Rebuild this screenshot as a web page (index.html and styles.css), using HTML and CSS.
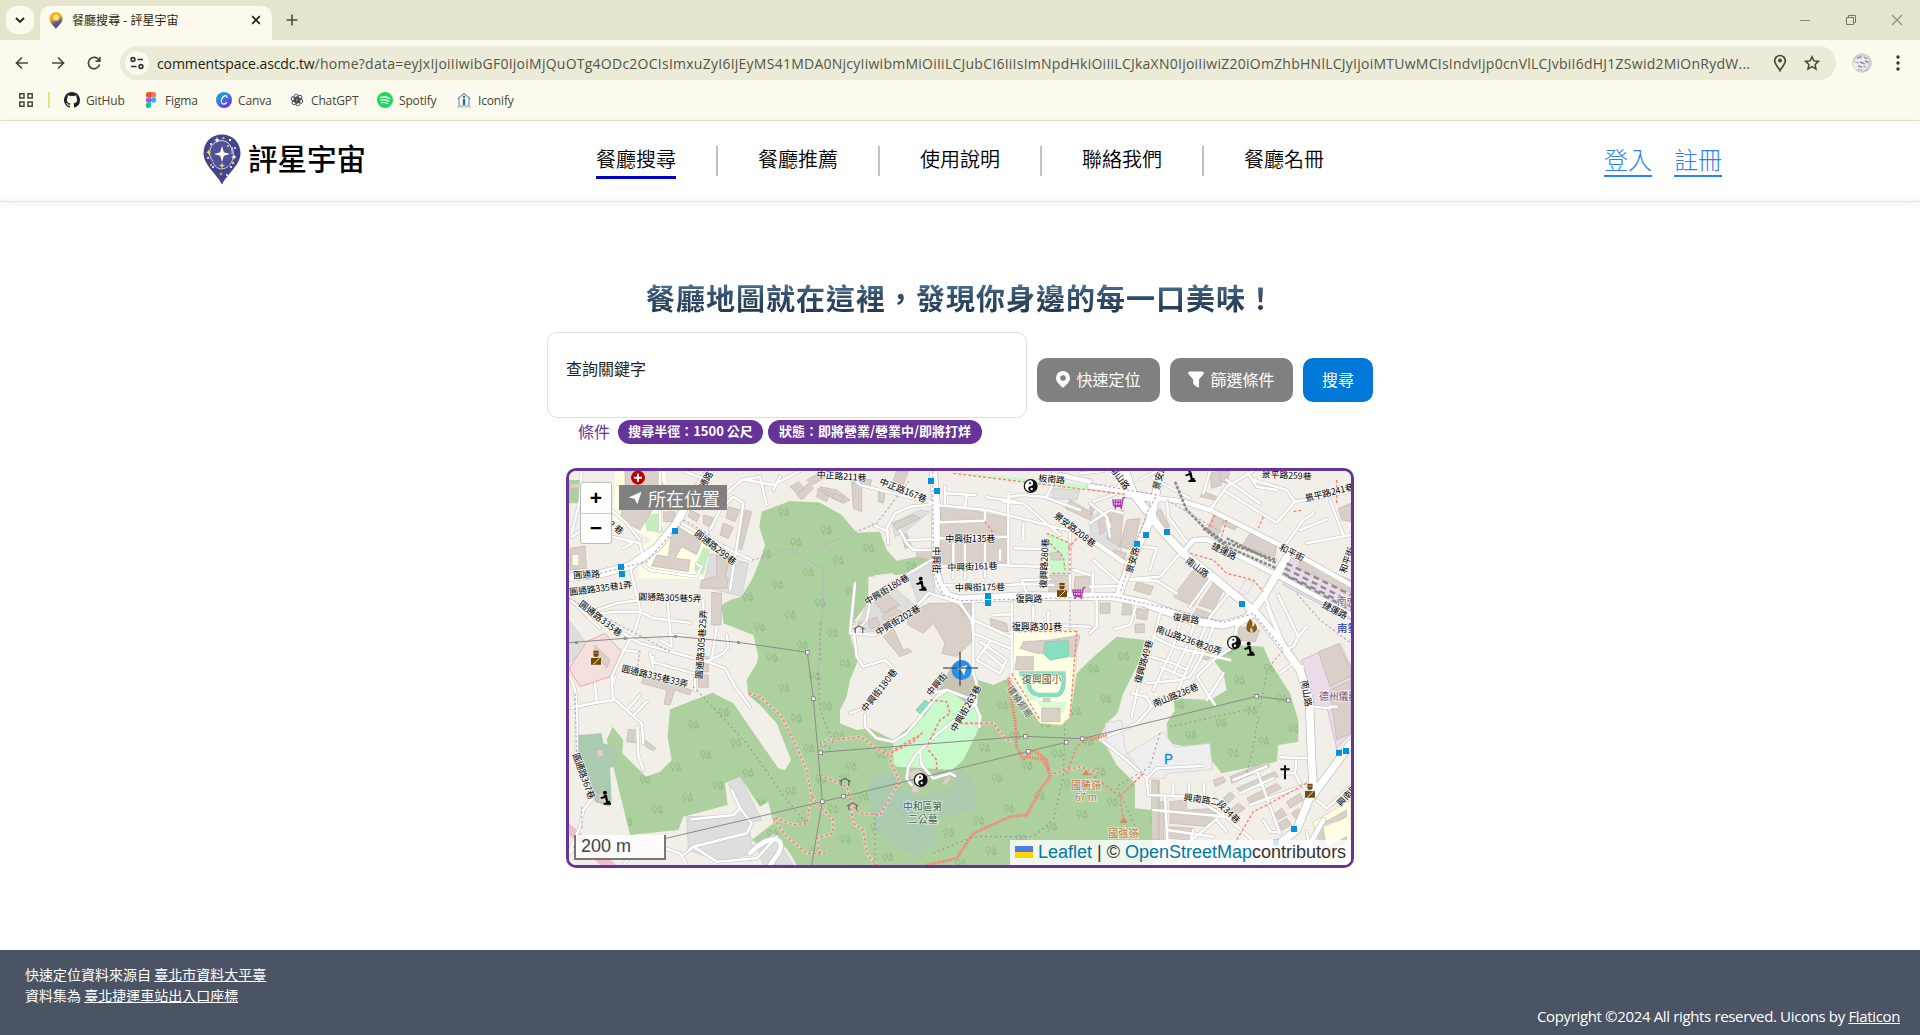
FILE: index.html
```html
<!DOCTYPE html>
<html lang="zh-Hant">
<head>
<meta charset="utf-8">
<title>餐廳搜尋 - 評星宇宙</title>
<link rel="stylesheet" href="styles.css">
</head>
<body>
<div class="browser">
  <div class="tabstrip">
    <div class="tab-menu"><svg width="12" height="12" viewBox="0 0 12 12"><path d="M2 4l4 4 4-4" fill="none" stroke="#222" stroke-width="1.9"/></svg></div>
    <div class="tab">
      <svg class="favicon" width="14" height="17" viewBox="0 0 14 17"><defs><linearGradient id="fav" x1="0" y1="0" x2=".3" y2="1"><stop offset=".45" stop-color="#f8ae1c"/><stop offset=".75" stop-color="#59558f"/></linearGradient></defs><path d="M7 0a6.6 6.6 0 0 1 6.6 6.6C13.600 11 9 14 7 17 5 14 .4 11 .4 6.600A6.600 6.600 0 0 1 7 0z" fill="url(#fav)"/><circle cx="7" cy="5.500" r="3" fill="#ffe27a"/></svg>
      <span class="tab-title">餐廳搜尋 - 評星宇宙</span>
      <svg width="10" height="10" viewBox="0 0 10 10"><path d="M1.200 1.200l7.600 7.600M8.800 1.200L1.200 8.800" stroke="#222" stroke-width="1.700"/></svg>
    </div>
    <svg class="plus" width="12" height="12" viewBox="0 0 12 12"><path d="M6 .5v11M.5 6h11" stroke="#4a4a3c" stroke-width="1.600"/></svg>
    <div class="winctl">
      <svg width="12" height="12" viewBox="0 0 12 12"><path d="M1 6.500h10" stroke="#8a8a7c"/></svg>
      <svg width="12" height="12" viewBox="0 0 12 12"><path d="M1.500 3.500h7v7h-7zM3.500 3.500v-2h7v7h-2" fill="none" stroke="#77776a"/></svg>
      <svg width="12" height="12" viewBox="0 0 12 12"><path d="M1 1l10 10M11 1L1 11" stroke="#8a8a7c" stroke-width="1.100"/></svg>
    </div>
  </div>
  <div class="toolbar">
    <div class="navbtns">
      <svg width="14" height="14" viewBox="0 0 14 14"><path d="M13 7H2M7 1.500L1.500 7 7 12.500" class="tb"/></svg>
      <svg width="14" height="14" viewBox="0 0 14 14"><path d="M1 7h11M7 1.500L12.500 7 7 12.500" class="tb"/></svg>
      <svg width="14" height="14" viewBox="0 0 14 14"><path d="M12.200 4.500A5.700 5.700 0 1 0 12.600 8.500M12.800 1v4.200H8.500" class="tb"/></svg>
    </div>
    <div class="omnibox">
      <span class="site"><svg width="14" height="14" viewBox="0 0 14 14"><g fill="none" stroke="#333" stroke-width="1.600"><circle cx="3" cy="3.500" r="1.900"/><path d="M7.500 3.500H13M1 10.500h5.500"/><circle cx="11" cy="10.500" r="1.900"/></g></svg></span>
      <span class="url"><b>commentspace.ascdc.tw</b>/home?data=eyJxIjoiIiwibGF0IjoiMjQuOTg4ODc2OCIsImxuZyI6IjEyMS41MDA0NjcyIiwibmMiOiIiLCJubCI6IiIsImNpdHkiOiIiLCJkaXN0IjoiIiwiZ20iOmZhbHNlLCJyIjoiMTUwMCIsIndvIjp0cnVlLCJvbiI6dHJ1ZSwid2MiOnRydW...</span>
      <svg class="pin" width="14" height="18" viewBox="0 0 14 18"><path d="M7 1.500a5.300 5.300 0 0 1 5.300 5.300C12.300 10.500 8 14 7 16.500 6 14 1.700 10.500 1.700 6.800A5.300 5.300 0 0 1 7 1.500z" class="tb"/><circle cx="7" cy="6.600" r="2" fill="#474739"/></svg>
      <svg width="16" height="16" viewBox="0 0 16 16"><path d="M8 1.800l1.900 4.100 4.500.5-3.300 3.100.9 4.500L8 11.700 4 14l.9-4.500L1.600 6.400l4.500-.5z" fill="none" stroke="#474739" stroke-width="1.500"/></svg>
    </div>
    <svg class="avatar" width="20" height="20" viewBox="0 0 20 20"><circle cx="10" cy="10" r="9.800" fill="#d0cdcb"/><path d="M2 8l4-4 3 2 4-4 4 5-3 2 3 4-5 4-4-2-5 2-2-5z" fill="#eee9f2"/><path d="M5 5l4-1M12 4l3 2M8 9l5 2M6 13l4 1M13 8l3 1" stroke="#8f9289" stroke-width="1.400"/><path d="M3 9l4 1M11 13l3 1" stroke="#9b8dc0"/></svg>
    <svg width="4" height="18" viewBox="0 0 4 18"><g fill="#33332a"><circle cx="2" cy="3" r="1.700"/><circle cx="2" cy="9" r="1.700"/><circle cx="2" cy="15" r="1.700"/></g></svg>
  </div>
  <div class="bookmarks">
    <svg class="apps" width="14" height="14" viewBox="0 0 14 14"><path d="M.8.800h4.200v4.200H.8zM9 .8h4.200v4.200H9zM.8 9h4.200v4.200H.8zM9 9h4.200v4.200H9z" fill="none" stroke="#474739" stroke-width="1.500"/></svg>
    <i class="vsep"></i>
    <span class="bm" style="width:79px"><svg width="16" height="16" viewBox="0 0 16 16"><path fill="#1f2328" d="M8 0C3.580 0 0 3.580 0 8c0 3.540 2.290 6.530 5.470 7.590.4.070.55-.17.55-.38 0-.19-.01-.82-.01-1.490-2.010.37-2.530-.49-2.690-.94-.09-.23-.48-.94-.82-1.130-.28-.15-.68-.52-.01-.53.63-.01 1.080.58 1.230.82.720 1.210 1.870.87 2.330.66.070-.52.280-.87.510-1.070-1.780-.2-3.640-.89-3.640-3.950 0-.87.310-1.590.82-2.150-.08-.2-.36-1.020.08-2.120 0 0 .67-.21 2.200.82a7.600 7.600 0 0 1 4 0c1.530-1.040 2.200-.82 2.200-.82.440 1.100.16 1.920.08 2.120.51.560.82 1.270.82 2.150 0 3.070-1.870 3.750-3.650 3.950.29.250.54.730.54 1.480 0 1.070-.01 1.930-.01 2.200 0 .21.150.46.550.38A8 8 0 0 0 16 8c0-4.420-3.580-8-8-8z"/></svg>GitHub</span>
    <span class="bm" style="width:73px"><svg width="16" height="16" viewBox="0 0 16 16"><path d="M5.500 0H8v5.300H5.500a2.650 2.650 0 0 1 0-5.300z" fill="#f24e1e"/><path d="M8 0h2.500a2.650 2.650 0 0 1 0 5.300H8z" fill="#ff7262"/><path d="M5.500 5.300H8v5.300H5.500a2.650 2.650 0 0 1 0-5.300z" fill="#a259ff"/><circle cx="10.600" cy="8" r="2.650" fill="#1abcfe"/><path d="M5.500 10.600H8v2.700a2.650 2.650 0 1 1-2.500-2.700z" fill="#0acf83"/></svg>Figma</span>
    <span class="bm" style="width:73px"><svg width="16" height="16" viewBox="0 0 16 16"><defs><linearGradient id="cv" x1="0" y1="0" x2=".6" y2="1"><stop offset="0" stop-color="#00c4cc"/><stop offset="1" stop-color="#7034f0"/></linearGradient></defs><circle cx="8" cy="8" r="8" fill="url(#cv)"/><path d="M10.800 5.800c.5-1.800-.7-2.600-2.200-2-2.400.9-3.900 4.300-3.100 6.600.8 2.400 3.800 2.200 5.200-.3" fill="none" stroke="#fff" stroke-width="1.300"/></svg>Canva</span>
    <span class="bm" style="width:88px"><svg width="16" height="16" viewBox="0 0 16 16"><rect width="16" height="16" rx="3" fill="#fff"/><g fill="none" stroke="#444" stroke-width=".9"><rect x="5.200" y="2.200" width="4" height="8" rx="2" id="petal"/><use href="#petal" transform="rotate(60 8 8)"/><use href="#petal" transform="rotate(120 8 8)"/><use href="#petal" transform="rotate(180 8 8)"/><use href="#petal" transform="rotate(240 8 8)"/><use href="#petal" transform="rotate(300 8 8)"/></g></svg>ChatGPT</span>
    <span class="bm" style="width:79px"><svg width="16" height="16" viewBox="0 0 16 16"><circle cx="8" cy="8" r="8" fill="#1ed760"/><g fill="none" stroke="#fff" stroke-linecap="round"><path d="M3.500 5.500c3-.9 6.500-.6 9 .8" stroke-width="1.500"/><path d="M4 8.200c2.600-.7 5.500-.4 7.700.9" stroke-width="1.300"/><path d="M4.400 10.800c2.300-.5 4.400-.3 6.300.8" stroke-width="1.100"/></g></svg>Spotify</span>
    <span class="bm"><svg width="16" height="16" viewBox="0 0 16 16"><rect width="16" height="16" fill="#fff"/><path d="M1.500 7L8 1.500 14.500 7M3 6v8h10V6" fill="none" stroke="#8b8f94" stroke-width="1.200"/><path d="M8 7v6" stroke="#1769aa" stroke-width="2.400"/><circle cx="8" cy="5" r="1.200" fill="#1769aa"/><path d="M1 15h14" stroke="#ccc" stroke-width="1.500"/></svg>Iconify</span>
  </div>
</div>

<header class="site-header">
  <div class="brand">
    <svg width="38" height="51" viewBox="0 0 38 51"><path d="M19 .5C29.500.500 37.500 8.500 37.500 19 37.500 31 25 39 19 50.500 13 39 .5 31 .5 19 .5 8.500 8.500.500 19 .5z" fill="#44448a"/><ellipse cx="17" cy="19" rx="12" ry="15" fill="#5a58a0" opacity=".6"/><path d="M10 27a12 12 0 0 1 6-20c8-2 14 5 13 13M29 13c4 10-1 21-10 22-4 0-8-3-9-7" fill="none" stroke="#d6d6ec" stroke-width="1"/><path d="M19 12l1.800 6.200L27 20l-6.200 1.800L19 28l-1.800-6.200L11 20l6.200-1.800z" fill="#fff"/><g fill="#fff"><path d="M14 3l.8 2.200L17 6l-2.200.8L14 9l-.8-2.200L11 6l2.200-.8zM31 20l.8 2.200L34 23l-2.200.8L31 26l-.8-2.200L28 23l2.200-.8z"/><circle cx="8" cy="10" r="1"/><circle cx="27" cy="6" r="1.200"/><circle cx="32" cy="14" r="1"/><circle cx="5" cy="24" r="1"/><circle cx="10" cy="33" r="1.100"/><circle cx="24" cy="41" r="1"/><circle cx="28" cy="33" r="1.100"/></g><g fill="#e9dc3d"><path d="M5.500 15.500l.7 2 2 .7-2 .7-.7 2-.7-2-2-.7 2-.7zM19 28.500l.9 2.200 2.200.9-2.200.9-.9 2.200-.9-2.200-2.200-.9 2.200-.9zM18 38l.5 1.500 1.500.5-1.500.5L18 42l-.5-1.500L16 40l1.500-.5z"/><circle cx="20.500" cy="4" r="1.100"/><circle cx="25" cy="12" r="1.100"/><circle cx="30" cy="29" r="1.200"/><circle cx="8" cy="31" r="1"/></g></svg>
    <span>評星宇宙</span>
  </div>
  <nav class="menu">
    <a class="on">餐廳搜尋</a><a>餐廳推薦</a><a>使用說明</a><a>聯絡我們</a><a>餐廳名冊</a>
  </nav>
  <div class="auth"><a>登入</a><a>註冊</a></div>
</header>

<main>
  <h1>餐廳地圖就在這裡，發現你身邊的每一口美味！</h1>
  <div class="searchrow">
    <div class="kw">查詢關鍵字</div>
    <button class="btn"><svg width="14" height="17" viewBox="0 0 14 17"><path fill="#fff" fill-rule="evenodd" d="M7 0a7 7 0 0 1 7 7c0 4-4 7-7 10C4 14 0 11 0 7a7 7 0 0 1 7-7zm0 4.200a2.800 2.800 0 1 0 0 5.600 2.800 2.800 0 0 0 0-5.600z"/></svg>快速定位</button>
    <button class="btn"><svg width="16" height="17" viewBox="0 0 16 17"><path fill="#fff" d="M2 .5h12c1.700 0 2.300 1.500 1.300 2.800L11 8.500v7.300c0 .8-.8 1-1.400.6L6 13.700c-.6-.4-.8-.8-.8-1.500V8.500L.7 3.300C-.3 2 .3.500 2 .5z"/></svg>篩選條件</button>
    <button class="btn go">搜尋</button>
  </div>
  <div class="conds"><span>條件</span><b>搜尋半徑：1500 公尺</b><b>狀態：即將營業/營業中/即將打烊</b></div>

  <div class="map">
    <svg class="tiles" viewBox="27 33 2346 1182" width="782" height="394">
      <defs>
        <g id="tree"><path d="M-8 13v-9M-8 4a6.500 8 0 1 1 .1 0M9 13v-6M9-13l-7 20h14z" fill="none" stroke="#8cb580" stroke-width="2.600"/></g>
        <pattern id="wood" width="98" height="98" patternUnits="userSpaceOnUse" patternTransform="translate(425 203) rotate(-22)"><rect width="98" height="98" fill="#add19e"/><use href="#tree" transform="translate(49 49) rotate(22)"/></pattern>
        <g id="taiji"><circle r="21" fill="#111"/><path d="M3-17A8.500 8.500 0 0 1 0 0 8.500 8.500 0 0 0-3 17 17.200 17.200 0 0 1 3-17z" fill="#fff" transform="rotate(-20)"/><circle cx="-2" cy="-8.500" r="3" fill="#111"/><circle cx="3" cy="9" r="3.500" fill="#fff"/></g>
        <g id="pray"><circle cx="-1" cy="-16" r="6"/><path d="M-4-9h9l3 17h6v6h3v6h-22v-5h5l2-4-3-11-11 3-3-5 10-3z"/></g>
        <g id="police" fill="#734a08"><path d="M-8-21h16v6H-8zM-8-13h16v3a8 8 0 0 1-16 0zM-15 1h30v20h-30z"/><path d="M10 2l-18 18" stroke="#f2efe9" stroke-width="3"/></g>
        <g id="cart" fill="none" stroke="#ac39ac" stroke-width="3.500"><path d="M20-17h-6l-5 26h-22M12-10h-30l3 16h25M-10-10v15M-2-10v15M5-10v15M-16-3h26"/><circle cx="-10" cy="14" r="1.500"/><circle cx="8" cy="14" r="1.500"/></g>
        <g id="hut" fill="none" stroke="#6d6d6d" stroke-width="4"><path d="M-17 2L0-7 17 2M-11 0v15M11 0v15"/><path d="M-18-12l30-2M-12-18l30-2" stroke="#8cb580" stroke-dasharray="3 4" stroke-width="3"/></g>
        <g id="tower"><rect x="-5.500" y="-5.500" width="11" height="11" fill="#fff" stroke="#8a858c" stroke-width="3"/></g>
        <g id="minor">
          <path d="M27 415L120 505M80 460L170 430 240 420M100 465L160 455 240 455M212 330L242 455 225 510 190 575 155 650 158 710 165 720M240 455L280 475 390 488M322 410L328 490 335 560M430 420V470M328 525L380 527M335 560L300 540M270 580L280 620M190 520L240 550 330 575 440 605 490 580 505 560 500 525M470 500L455 600M165 650L155 675M280 590L275 605 400 640M230 575L190 570M430 600L495 625 525 680 570 740M405 640V690M27 745L100 730 160 720M50 745V850L48 900 85 960 100 1010 70 1050 60 1100 30 1170M30 650L45 690 50 740M105 670L110 725M160 715L245 790 250 850M205 745L240 705M222 765L260 725M232 800L235 885 250 930"/>
          <path d="M250 315L270 330 370 345 410 350 425 320 410 312M365 190L430 225 520 275 575 300M450 210L480 150 520 110 550 130 510 390M450 85L500 100 545 60 600 50 620 135M440 60L400 45 370 33M560 60L640 75 720 33M640 90L660 50M155 230L200 240 215 250 190 265M200 240L240 250 250 300M300 33V210M36 230L60 215M120 120L200 190 240 240M35 220L60 120 65 33"/>
          <path d="M860 33L900 75 1080 120 1128 130M1128 132L1050 140 1005 160 980 205 985 250M940 195L985 215M1020 210L1040 250 1060 270 1110 270M1045 240L1120 237M1128 135L1280 150 1560 220 1690 310M1155 80V130M1155 100L1245 105M1220 105L1215 140M1280 112L1370 125M1345 100V310M1140 187L1275 182V150M1140 235L1340 230M1140 320L1250 312 1470 322M1140 375L1290 380 1380 372 1480 375M1180 250V355M1215 250V355M1275 230V350M1320 270V300M1330 125L1390 130 1500 225M1385 105L1450 110 1560 150M1385 105L1350 110M1390 192V240M1365 265L1470 268M1390 360L1470 358M1385 360L1400 400M1460 110L1480 70 1480 33M1630 33L1560 40"/>
          <path d="M885 370L870 520 945 525 1010 490 1060 450 1105 400M885 518L920 480 930 430 980 380 1115 300M882 520L890 590 910 620 975 600 995 620M1110 400L1200 430 1235 480 1240 520 1240 640 1250 670M1240 425V620M1355 430V640L1350 660M1300 465L1355 463M1240 480L1350 530M1240 520L1350 565M1290 545L1250 600M1260 545L1340 600 1320 640 1250 600M1270 570L1330 620M1420 440V490M1465 455V490M1360 490L1590 500M1530 210V410M1540 330L1590 345"/>
          <path d="M1160 690L1130 710 1040 820 1000 845 950 835 915 800 915 765M870 760L910 745M1160 690L1240 720 1260 770 1258 800M1120 700L1160 690M1250 670L1248 730 1140 815 1070 880 1045 920 1040 955 1055 975M1080 870L1085 915 1120 955 1170 940 1185 948"/>
          <path d="M1590 75L1690 85M1690 33L1720 90M1740 60L1790 33M1930 100L1950 33M1890 115L1780 55M1950 150L2000 80 2080 33M1990 90L2120 170 2150 188 2205 125 2180 90 2080 60M2000 60L2100 130M2060 33L2090 80 2150 90M2205 125L2373 95M2180 250L2230 180 2260 160M2220 210L2300 178M2240 250L2290 240 2373 225M2310 120L2350 225M1690 33L1670 100 1600 125M1690 160L1650 150 1590 190M1640 180L1650 230M1600 240L1700 310M1750 260L1790 265 1770 330M1820 120L1825 170 1880 245M1590 130L1640 170 1650 200M1860 280L1800 350 1710 357M1710 360L1790 362 1850 400M1590 380L1680 378M1600 300L1690 380M1598 340V400M1610 420V500L1590 520M1665 507L1710 495 1730 430"/>
          <path d="M2010 395L1950 470 1850 700M1955 350L1890 440M1800 460L1780 540 1750 610 1730 700 1715 770M1860 490L1840 560 1780 690M1905 485L1880 560 1840 640M1960 500L1920 600 1890 650 1860 660 1760 670M1780 530L1840 560 2010 600M1770 590L1840 610 1880 630M1800 620L1870 650M2080 470L2030 500 2020 560 1960 600 1910 650 1965 735M1990 640L1940 720M1715 700L1760 710 1775 740 1730 790 1640 830M2110 400L2150 500 2175 560M2155 405L2215 530 2200 560 2170 570M2215 530L2240 500M2120 440L2170 560M2260 740L2310 745M2310 740L2330 740M2160 640L2200 610 2230 620"/>
          <path d="M1630 845L1700 900 1760 955 1790 925 1925 918M1760 955L1765 1005 1900 1010 2010 1080 2100 1160M1840 970V1010M1887 970V1005M1932 972V1010M1815 1010L1822 1140M1780 1050L2000 1070M1820 1110L1960 1130M1820 1140L1890 1145 1990 1060M1970 1080L2000 1115M1900 1110L1890 1150M1990 1150L2000 1215M2020 960L2120 920M2040 1000L2140 955M2070 1035L2250 970M2090 930L2160 1120M2110 1080L2130 1115 2160 1117M2160 892L2240 895M2210 895L2205 940 2220 970M2200 940H2170M2240 1115L2260 1215M2270 1020L2300 1045 2373 980"/>
          <path d="M395 1078L520 1065 540 1045 515 990M540 1045L575 1090 560 1120 480 1140 400 1160 365 1190M220 1140L300 1160 360 1180 380 1215M400 1160L470 1205 590 1195 650 1130M190 1215L220 1180M27 1180L60 1150 90 1170 130 1180"/>
        </g>
        <g id="major">
          <path d="M27 352L120 342 210 318 290 262 350 190 380 130 400 100 450 33"/>
          <path d="M1120 33L1128 130 1128 330 1138 375 1165 408 1200 418 1400 408 1660 410 1750 428 1900 484 1990 495 2060 475 2110 410 2185 285"/>
          <path d="M1695 33L1720 100 1770 165 1800 205 1870 280 1970 360 2090 460 2170 560 2220 630 2248 720 2255 900 2260 985 2210 1110 2140 1165 2080 1215M2373 850L2285 970 2255 1010"/>
          <path d="M1800 33L1775 170 1710 310 1675 405M1700 100L1790 118"/>
        </g>
        <g id="mid"><path d="M1590 80L1700 95 1790 115 1870 125 1950 150 2170 260 2373 375M1870 275L1900 240 1940 238 2150 345 2373 465M2185 290L2150 350M2215 1215L2290 1080M1500 45L1590 65"/><path d="M570 1180C640 1110 680 1140 655 1180L630 1215" /></g>
      </defs>
      <rect x="27" y="33" width="2346" height="1182" fill="#f2efe9"/>
      <g class="areas">
        <path fill="#ffffe5" d="M165 33L315 33 320 180 280 240 160 180zM235 270L345 190 460 250 430 358 235 355z"/>
        <path fill="#add19e" d="M27 60H65V130H27z"/><path fill="#c5edc0" d="M250 165L295 160 310 220 260 212zM400 330L430 262 450 270 430 345z"/>
        <path fill="url(#wood)" d="M605 155L690 123 780 128 845 165 890 218 960 215 980 270 1010 302 1070 290 1115 300 1050 340 1010 345 925 350 925 425 885 480 868 515 880 560 895 600 870 660 860 710 840 750 840 790 890 810 930 805 1000 840 1060 790 1130 700 1160 690 1240 720 1255 660 1300 675 1345 655 1440 790 1505 795 1530 770 1550 640 1590 600 1670 530 1755 540 1740 600 1720 640 1690 700 1672 760 1640 790 1615 840 1640 860 1670 915 1725 970 1725 1045 1775 1050 1780 1215 710 1215 690 1180 650 1130 590 1150 575 1140 640 1090 625 1025 600 1040 540 950 495 970 503 1035 370 1070 355 1110 210 1125 160 920 140 840 158 800 190 840 187 880 258 950 300 935 335 900 323 830 330 748 458 698 520 730 655 925 675 930 693 900 650 790 600 735 565 705 560 660 590 610 595 590 580 525 490 490 485 435 510 420 545 410 580 350 600 300 615 255 598 200z"/>
        <path fill="url(#wood)" d="M1960 600L2030 555 2110 560 2132 610 2190 700 2215 780 2215 845 2155 855 2150 905 1985 940 1930 870 1825 850 1820 790 1845 750 1840 715 1950 720 2000 690 1990 640z"/>
        <path fill="#f2efe9" d="M945 345L1000 340 1010 360 960 390 925 390z"/>
        <path fill="#c8facc" d="M1000 840L1060 800 1130 700 1180 695 1240 735 1268 770 1250 820 1210 900 1170 935 1110 935 1040 950 1000 910zM1460 215L1530 250 1530 340 1470 340zM1590 70L1760 105 1765 130 1690 95 1590 85zM1180 35L1590 75V90L1230 45z"/>
        <path fill="#aacbaf" d="M930 950L1020 935 1190 930 1230 945 1250 1000 1245 1050 1130 1080 1125 1150 1070 1185 1000 1160 945 1100 925 1000zM55 825L125 820 130 850 165 860 170 915 150 925 155 1020 150 1040 105 1025 80 950 55 880z"/>
        <path fill="#add19e" d="M1010 920L1190 930 1180 985 1080 1010 1020 985z"/>
        <path fill="#ffffe5" stroke="#efd7b0" stroke-width="3" d="M1360 515L1550 510 1548 610 1530 770 1505 795 1440 790 1355 660zM2260 1085L2373 1020V1215H2280z"/>
        <path fill="#c9c4b0" d="M1135 690L1180 610 1240 650 1250 680 1225 735 1180 700z"/>
        <path fill="#dedede" stroke="#c8c8c8" stroke-width="2" d="M380 1070L500 1068 550 1060 505 972 540 950 605 1080 565 1090 580 1180 480 1205 385 1170zM590 1160L640 1120 700 1215H610zM27 480L75 545 80 560 27 610zM450 280L565 310 545 410 430 380zM1045 345L1110 310 1125 400 1075 430zM925 420L1000 380 1080 450 980 510 925 515 890 500zM1590 180L1620 150 1700 300 1690 310 1590 250zM995 190L1080 150 1110 155 1030 220 1005 230zM1480 85L1560 90 1550 120 1475 115z"/>
        <path fill="#eee" stroke="#d8c8cc" stroke-width="2" d="M1695 885L1810 815 1845 862 1950 850 1957 928 1820 940 1815 955 1760 955zM1635 790L1685 780 1695 870 1740 930 1640 860zM2055 360L2085 365 2060 405 2035 400z"/>
        <path fill="#f3dfdc" stroke="#e9a9a4" stroke-width="3" d="M80 545L135 520 185 575 150 650 60 680 27 625z"/>
        <path fill="#efbfc9" d="M27 1090L170 1215H120L27 1125z"/>
        <path fill="#ebdbe8" stroke="#c9a9c4" stroke-width="2" d="M2225 600L2340 550 2373 620V820L2330 865 2300 740 2265 740zM2190 290L2373 410V480L2170 375z"/>
        <path fill="#88dfc0" stroke="#68bfa0" stroke-width="2" d="M1455 545L1525 540 1525 590 1470 600 1450 580zM1068 750L1095 720 1115 735 1090 770z"/>
        <path fill="#c8facc" d="M1375 635L1400 720 1520 725 1510 760 1450 750z" opacity=".7"/>
        <path fill="none" stroke="#88dfc0" stroke-width="14" d="M1378 641H1490M1408 650Q1400 702 1440 705H1490Q1515 700 1510 641H1480"/>
      </g>
      <g class="bld">
        <path d="M195 33H290L310 75 280 145 240 210 180 180 195 110zM335 215L355 200 425 245 410 285 365 260 345 295 390 300 385 335 275 318 290 285 325 290zM390 150L420 165 410 185 385 170zM430 165L465 175 445 200 430 190zM505 140L540 150 525 185 498 175zM490 190L520 202 505 235 480 225zM555 150L575 155 545 270 535 265zM30 265L75 258 80 325 30 330zM30 70H60V85H30zM310 155H345V185H310z"/>
        <path d="M470 285L510 295 495 350 505 355 500 385 420 385 425 360 470 350zM455 397L485 400 483 495 455 495zM690 80L715 65 735 85 710 100zM710 105L745 70 760 85 725 120zM740 60L785 35 800 50 755 75zM775 85L810 100 800 125 770 110zM820 100L850 110 845 125 815 115zM875 65L905 70 905 155 880 145zM780 80L830 90 870 120 850 130 790 100zM955 90L975 95 970 130 955 125zM1010 33H1045L1030 75 1000 60zM910 55L935 60 930 80 905 75zM1000 190L1060 165 1080 175 1010 210zM1025 225L1040 220 1055 260 1035 265zM1070 275L1115 265V300L1070 290z"/>
        <path d="M1140 140L1210 145 1345 175 1340 310H1140zM1470 345H1525V405H1465zM1545 350H1590V410H1540zM1470 280L1500 275 1505 300 1475 300zM1515 145L1590 180 1600 160 1530 120zM1290 475L1340 490 1345 515 1295 510zM1200 430H1235V465H1205zM940 420L980 400 1020 435 970 460zM965 470L1000 440 1030 460 990 495zM925 480L950 470 960 500 930 505zM1040 460L1110 430 1190 430 1235 490 1235 545 1190 590 1145 580 1155 550 1120 490 1090 520 1045 495zM970 530L1000 505 1030 570 1045 565 1055 575 1020 590zM1390 545L1470 540 1560 525 1545 590 1530 590 1525 540 1455 545 1450 580 1430 580 1380 565zM1370 590H1420V630H1365z"/>
        <path d="M1445 745H1500V785H1445zM1450 715H1470V725H1450zM1045 935L1070 925 1110 950 1100 980 1050 960zM1055 980L1075 970 1080 995 1055 1000zM1145 970L1165 945 1175 955 1155 978zM1615 170L1650 155 1650 200 1620 225zM1655 160L1690 150 1680 260 1640 235zM1700 180L1740 175 1720 270 1680 260zM1660 270L1700 280 1690 300 1650 280zM1800 145L1830 200 1815 205 1790 160zM1590 165L1610 140 1590 140z"/>
        <path d="M1730 365L1780 380 1770 405 1722 390zM1900 330L1950 355 1900 440 1840 410zM1960 370L1995 380 1960 450 1915 435zM1910 445L1950 460 1940 475 1900 465zM1620 430H1650V460H1620zM1690 430L1715 435V465H1685zM1730 445L1765 450 1760 480 1730 475zM1725 492H1753V518H1725zM1960 165L1995 170 1970 235 1940 210zM1990 180L2035 195 2025 210 1990 195zM2070 220L2150 255 2145 290 2045 260zM2220 300L2373 360V400L2215 325zM2335 145L2373 130V185L2345 180zM1950 40L1975 33 1985 75 1955 85zM1930 95L1970 110 1965 120 1920 110zM1980 33H2010L2000 70 1985 65zM2040 500L2100 510 2085 545 2030 540zM1930 570L1960 585 1945 600 1920 595zM2275 575L2335 552 2373 630V650L2310 680zM2310 690L2373 660V820L2330 840z"/>
        <path d="M1775 960H1795V1140H1775zM1797 960V1140H1812V1025H1797zM1830 1025L1880 1020V1050L1970 1045 1965 1070 1830 1050zM1830 1060L1960 1070 1950 1100 1830 1090zM1830 1100L1900 1105 1890 1140 1830 1135zM1960 960L1990 950 1998 965 1965 980zM1990 1015L2010 995 2025 1010 2005 1030zM2010 1050L2035 1030 2055 1045 2030 1065zM2010 950L2120 905 2130 920 2015 970zM2030 985L2145 935 2155 950 2045 1000zM2060 1015L2150 970 2165 985 2070 1030zM2145 1060L2165 1045 2180 1065 2155 1080zM2155 1090L2180 1075 2195 1095 2165 1110zM2180 1025L2220 1000 2230 1020 2190 1045zM2195 1060L2215 1045 2235 1065 2210 1080zM205 808L235 812 232 850 200 845zM255 840L288 865 280 872 258 860zM250 645L395 690 390 705 345 690 330 735 312 732 320 690 245 670zM415 645H445V682H415zM430 590H445V635H430zM105 555L150 600 140 625 105 575zM108 870L130 868 132 890 112 890zM115 1000L145 1005 140 1030 115 1025zM2270 1100L2360 1050V1070L2290 1110 2300 1160 2360 1130V1150L2280 1190z"/>
      </g>
      <path d="M2290 1100L2345 1080 2350 1105 2300 1125zM38 285H55V315H38z" fill="#fffde0"/>
      <g fill="none" stroke-linejoin="round" stroke-linecap="round">
        <use href="#minor" stroke="#c9c6c2" stroke-width="11"/><use href="#mid" stroke="#c4c1bd" stroke-width="18"/><use href="#major" stroke="#bdb9b5" stroke-width="27"/>
        <use href="#minor" stroke="#fff" stroke-width="7.500"/><use href="#mid" stroke="#fff" stroke-width="14"/><use href="#major" stroke="#fff" stroke-width="23"/>
      </g>
      <g fill="none" stroke="#8c8c8c" stroke-width="8" stroke-dasharray="10 4"><path d="M1845 65L1880 150 1930 200 1990 245 2150 300M1930 205L2000 260 2150 325M2000 235L2150 310"/><path d="M2180 310L2373 405M2175 325L2373 425M2170 340L2373 440M2185 350L2373 450" stroke-width="7" stroke-dasharray="18 12"/></g>
      <g class="paths">
        <path class="halo" d="M565 700L600 710 665 770 710 860 740 930 755 1010 740 1090 700 1095 640 1070M755 1010L790 1050 820 1080 818 1120 770 1135 780 1180M640 1075L680 1130 740 1180 800 1180M780 860L800 840 870 835 900 830 980 885 1060 845 1090 815M780 945L860 980 880 1040 900 1060 960 1065 1010 980 1020 970 990 900 1000 870 1080 825M870 1030L880 1090 910 1110 920 1180 950 1215M1200 790L1300 790 1340 840 1365 840M1480 940L1560 920 1620 940"/>
        <path class="track" d="M565 700L600 710 665 770 710 860 740 930 755 1010 740 1090 700 1095 640 1070M755 1010L790 1050 820 1080 818 1120 770 1135 780 1180M640 1075L680 1130 740 1180 800 1180M780 860L800 840 870 835 900 830 980 885 1060 845 1090 815M780 945L860 980 880 1040 900 1060 960 1065 1010 980 1020 970 990 900 1000 870 1080 825M870 1030L880 1090 910 1110 920 1180 950 1215M1105 870L1130 900 1130 935M1110 720L1160 725 1170 760 1140 780 1100 860M1200 790L1300 790 1340 840 1365 840M1520 940L1550 860 1590 830M1480 940L1560 920 1620 940M1590 940L1680 1010 1690 1080M1680 1010L1750 940"/>
        <path class="steps" d="M1100 1215L1190 1195 1240 1120 1350 1070 1400 1065 1440 990 1470 950 1460 900 1420 870 1390 900 1370 860 1365 780 1350 700 1347 650M1400 890L1450 900 1465 930M1590 840L1640 825"/>
        <path class="foot" d="M1355 640L1440 780M1530 770L1550 515 1370 515M1890 280L1960 300 2000 340 2080 360 2110 395M1460 220L1530 250V340H1470M1470 250L1510 290 1515 330M1275 185L1300 220M1965 165L1940 220M2000 180L1985 230M2110 170L2095 205M2200 155L2230 150M2240 970L2130 1030 2080 1055 2030 1140 2010 1170M2330 60V130M1180 40L1590 90 1700 103M1560 225L1520 270"/>
        <path class="cyc" d="M27 415L330 575M120 340L260 305 370 180M575 300L620 290 690 265 790 330 785 500 775 640M370 180L450 225M1118 33L1120 340 1150 405 1200 422 1660 410 1850 450 1990 488 2080 460 2170 570 2120 630M1590 70L1790 105 1760 160 1680 400M1820 120L1990 220M2210 400L2280 480 2373 550M1530 420V510M780 260L950 190 1050 60M240 570L230 640M45 700L50 900M65 1040V1110"/>
        <path class="wild" d="M400 680L560 850 680 1020 740 1090M775 640L780 750 820 850M780 490V600M780 850L820 870M945 1215V1050M1120 1180L1240 1130 1420 1130 1480 1080 1510 950 1515 780M1800 820L1770 920 1670 980 1740 1130M1830 800L1990 765 2100 740 2120 640M2095 770L2080 860 2060 940"/>
      </g>
      <g fill="none" stroke="#8d8a8d" stroke-width="3"><path d="M27 548L195 535 346 529 535 547 742 577 760 715 787 1025 755 1215M318 1135L787 1025 850 1010 1405 874 1519 847M780 877L1396 829 1567 836 2090 709 2185 721"/></g>
      <g fill="#999490"><path d="M45 543h9v9h-9zM191 531h9v9h-9zM342 525h9v9h-9zM531 543h9v9h-9z"/></g>
      <use href="#tower" x="742" y="577"/><use href="#tower" x="760" y="716"/><use href="#tower" x="782" y="878"/><use href="#tower" x="787" y="1025"/><use href="#tower" x="850" y="1009"/><use href="#tower" x="1396" y="829"/><use href="#tower" x="1405" y="874"/><use href="#tower" x="1519" y="847"/><use href="#tower" x="1567" y="836"/><use href="#tower" x="2090" y="709"/><use href="#tower" x="2185" y="721"/>
      <g fill="#0092da"><path d="M336 204h18v18h-18zM174 312h18v18h-18zM177 333h18v18h-18zM1104 54h18v18h-18zM1122 84h18v18h-18zM1275 399h18v18h-18zM1275 420h18v18h-18zM1749 216h18v18h-18zM1722 243h18v18h-18zM1812 207h18v18h-18zM2037 423h18v18h-18zM2328 869h18v18h-18zM2349 864h18v18h-18zM2193 1098h18v18h-18zM2139 1139h18v18h-18z"/></g>
      <circle cx="234" cy="53" r="21" fill="#bf0000"/><path d="M234 41v24M222 53h24" stroke="#fff" stroke-width="6"/>
      <use href="#taiji" x="1412" y="78"/><use href="#taiji" x="2022" y="548"/><use href="#taiji" x="1082" y="960"/>
      <use href="#pray" x="1083" y="372"/><use href="#pray" x="1890" y="46"/><use href="#pray" x="2067" y="567"/><use href="#pray" x="136" y="1014"/>
      <use href="#police" x="108" y="593"/><use href="#police" x="1506" y="390"/><use href="#police" x="2250" y="992"/>
      <use href="#cart" x="1556" y="400"/><use href="#cart" x="1676" y="130"/>
      <use href="#hut" x="855" y="962"/><use href="#hut" x="878" y="1036"/><use href="#hut" x="897" y="505"/>
      <path d="M2070 476c14 12 4 18 8 24 6-2 6-8 5-12 14 14 8 28-6 30 4-8-1-12-4-16-4 6-3 10 0 16-16-4-20-18-3-42z" fill="#8a5a12"/>
      <path d="M2175 916v42M2161 928h28" stroke="#111" stroke-width="6"/>
      <g fill="#d08f55"><path d="M1578 928l11 18h-22zM1691 1070l12 19h-24z"/></g>
      <g class="lb">
        <text transform="translate(467 262) rotate(38)" textLength="150">圓通路299巷</text>
        <text transform="translate(80 343) rotate(-3)" textLength="80">圓通路</text>
        <text transform="translate(122 384) rotate(-7)" textLength="190">圓通路335巷1弄</text>
        <text transform="translate(330 412) rotate(2)" textLength="190">圓通路305巷5弄</text>
        <text transform="translate(122 475) rotate(38)" textLength="155">圓通路335巷</text>
        <text transform="translate(423 553) rotate(-86)" textLength="208">圓通路305巷25弄</text>
        <text transform="translate(285 648) rotate(14)" textLength="205">圓通路335巷33弄</text>
        <text transform="translate(72 948) rotate(70)" textLength="145">圓通路367巷</text>
        <text transform="translate(140 180) rotate(38)" textLength="120">路292巷</text>
        <text transform="translate(430 70) rotate(-58)" textLength="80">圓通路</text>
        <text transform="translate(845 48) rotate(4)" textLength="150">中正路211巷</text>
        <text transform="translate(1030 90) rotate(22)" textLength="150">中正路167巷</text>
        <text transform="translate(1475 57) rotate(5)" textLength="80">板南路</text>
        <text transform="translate(1545 208) rotate(38)" textLength="150">景安路208巷</text>
        <text transform="translate(1231 236)" textLength="150">中興街135巷</text>
        <text transform="translate(1237 319) rotate(-2)" textLength="150">中興街161巷</text>
        <text transform="translate(1260 381) rotate(-1)" textLength="150">中興街175巷</text>
        <text transform="translate(1128 300) rotate(90)" textLength="80">中興街</text>
        <text transform="translate(1452 310) rotate(-87)" textLength="150">復興路280巷</text>
        <text transform="translate(1407 415)" textLength="80">復興路</text>
        <text transform="translate(1431 498)" textLength="150">復興路301巷</text>
        <text transform="translate(980 388) rotate(-31)" textLength="150">中興街180巷</text>
        <text transform="translate(1013 480) rotate(-31)" textLength="150">中興街202巷</text>
        <text transform="translate(957 690) rotate(-52)" textLength="155">中興街180巷</text>
        <text transform="translate(1130 672) rotate(-50)" textLength="80">中興街</text>
        <text transform="translate(1217 745) rotate(-60)" textLength="155">中興街263巷</text>
        <text transform="translate(1380 725) rotate(55)" textLength="110" fill="#555">環繞迴廊</text>
        <text transform="translate(1717 300) rotate(-74)" textLength="80">景安路</text>
        <text transform="translate(1797 50) rotate(-74)" textLength="80">景安路</text>
        <text transform="translate(1680 52) rotate(54)" textLength="80">南山路</text>
        <text transform="translate(2180 45) rotate(3)" textLength="150">景平路259巷</text>
        <text transform="translate(2308 97) rotate(-14)" textLength="150">景平路241巷</text>
        <text transform="translate(1993 273) rotate(27)" textLength="80">捷運路</text>
        <text transform="translate(1912 322) rotate(38)" textLength="80">南山路</text>
        <text transform="translate(2196 277) rotate(27)" textLength="80">和平街</text>
        <text transform="translate(2360 300) rotate(-70)" textLength="80">和平街</text>
        <text transform="translate(2325 450) rotate(28)" textLength="80">捷運路</text>
        <text transform="translate(1878 475) rotate(10)" textLength="80">復興路</text>
        <text transform="translate(1887 540) rotate(20)" textLength="208">南山路236巷20弄</text>
        <text transform="translate(1750 605) rotate(-74)" textLength="134">復興路49巷</text>
        <text transform="translate(1846 705) rotate(-22)" textLength="145">南山路236巷</text>
        <text transform="translate(2240 700) rotate(80)" textLength="80">南山路</text>
        <text transform="translate(1925 1018) rotate(8)" textLength="108">興南路二</text>
        <text transform="translate(2006 1055) rotate(45)" textLength="84">段34巷</text>
        <text transform="translate(2362 1005) rotate(-45)" textLength="80">興南路</text>
        <text class="poi" transform="translate(1445 655)" textLength="120" fill="#5d5d2e">復興國小</text>
        <text class="poi" transform="translate(1088 1037)" textLength="118" fill="#48614e">中和區第</text>
        <text class="poi" transform="translate(1088 1075)" textLength="90" fill="#48614e">二公墓</text>
        <text class="poi" transform="translate(1578 972)" textLength="90" fill="#bf7440">國勝嶺</text>
        <text class="poi" transform="translate(1578 1008)" textLength="66" fill="#bf7440">67 m</text>
        <text class="poi" transform="translate(1690 1118)" textLength="90" fill="#bf7440">國強嶺</text>
        <text class="poi" transform="translate(2336 705)" textLength="118" fill="#7d5579">德州儀器</text>
        <text class="poi" transform="translate(2375 422)" textLength="90" fill="#777">南方莊</text>
        <text class="poi metro" transform="translate(2378 502)" textLength="92" fill="#4a5ab0">南勢角</text>
        <text class="park" transform="translate(1825 895)">P</text>
      </g>
      <circle cx="1205" cy="630" r="30" fill="#2491f2"/><path d="M1221 616l-9 31-7-15-16-7z" fill="#eef4e8"/>
      <path d="M1200 575v102M1149 624h105" stroke="#3d454c" stroke-opacity=".75" stroke-width="5"/>
    </svg>
    <div class="zoomctl"><span>+</span><span>−</span></div>
    <div class="locate"><svg width="14" height="14" viewBox="0 0 14 14"><path fill="#fff" d="M13.500.700L9.300 13.300 6.500 7.800 .5 6.400z"/></svg>所在位置</div>
    <div class="scale">200 m</div>
    <div class="attr"><svg width="18" height="12" viewBox="0 0 18 12"><path fill="#4c7be1" d="M0 0h18v6H0z"/><path fill="#ffd500" d="M0 6h18v6H0z"/></svg><a>Leaflet</a> | © <a>OpenStreetMap</a>contributors</div>
  </div>
</main>

<footer>
  <p class="src">快速定位資料來源自 <u>臺北市資料大平臺</u><br>資料集為 <u>臺北捷運車站出入口座標</u></p>
  <p class="copy">Copyright ©2024 All rights reserved. Uicons by <u>Flaticon</u></p>
</footer>
</body>
</html>
```
FILE: styles.css
```css
* { box-sizing: border-box; }
body { margin: 0; width: 1920px; height: 1035px; overflow: hidden; background: #fff; display: flex; flex-direction: column; font-family: "Open Sans", "Noto Sans CJK TC", sans-serif; color: #000; }
svg { display: block; flex: none; }

/* browser window */
.browser { height: 121px; flex: none; background: #fcfaec; border-bottom: 1px solid #e2e2cc; font-size: 12px; }
.tabstrip { height: 40px; background: #e5e5cd; display: flex; align-items: center; padding-left: 6px; }
.tab-menu { width: 28px; height: 28px; border-radius: 10px; background: #fcfaec; display: grid; place-items: center; }
.tab { margin-left: 6px; align-self: flex-end; width: 232px; height: 34px; border-radius: 10px 10px 0 0; background: #fcfaec; display: flex; align-items: center; padding: 0 11px 6px 9px; }
.tab-title { margin-left: 9px; flex: 1; color: #1f1f14; white-space: nowrap; letter-spacing: .05px; }
.plus { margin-left: 14px; }
.winctl { margin-left: auto; display: flex; gap: 34px; padding-right: 17px; }
.toolbar { height: 46px; display: flex; align-items: center; padding: 0 20px 0 15px; }
.tb { fill: none; stroke: #474739; stroke-width: 1.7; }
.navbtns { display: flex; gap: 22px; width: 105px; flex: none; }
.omnibox { width: 1716px; flex: none; height: 34px; border-radius: 17px; background: #ebebd7; display: flex; align-items: center; padding: 0 16px 0 5px; }
.site { width: 24px; height: 24px; border-radius: 50%; background: #fcfaec; display: grid; place-items: center; flex: none; }
.url { margin-left: 8px; flex: 1; font-size: 14px; letter-spacing: .25px; color: #55554a; white-space: nowrap; }
.url b { font-weight: 400; color: #1d1d14; letter-spacing: -.1px; }
.pin { margin-right: 17px; }
.avatar { margin: 0 24px 0 16px; }
.bookmarks { display: flex; align-items: center; height: 28px; padding-left: 19px; color: #45453a; letter-spacing: -.15px; }
.vsep { width: 2px; height: 16px; background: #dbe67f; margin: 0 14px 0 15px; }
.bm { display: flex; align-items: center; gap: 6px; white-space: nowrap; }

/* site header */
.site-header { height: 81px; flex: none; border-bottom: 1px solid #e3e4ec; box-shadow: 0 2px 10px rgba(0,0,0,.05), inset 0 -8px 8px -6px rgba(0,0,0,.03); display: flex; align-items: center; padding: 0 198px 4px 203px; font-family: "Noto Sans CJK TC", sans-serif; }
.brand { display: flex; align-items: center; gap: 7px; width: 393px; font-size: 29.5px; font-weight: 500; white-space: nowrap; }
.brand span { padding-bottom: 4px; }
.menu { display: flex; padding-top: 2px; }
.menu a { font-size: 20px; font-weight: 350; line-height: 34px; height: 37px; position: relative; margin-right: 82px; }
.menu a.on { border-bottom: 3px solid #0000c8; }
.menu a:not(:last-child)::after { content: ""; position: absolute; left: 120px; top: 4px; width: 2px; height: 30px; background: #c0c0c0; }
.auth { margin-left: auto; display: flex; gap: 22px; font-size: 24px; font-weight: 300; color: #2a80ff; }
.auth a { line-height: 33px; height: 35px; border-bottom: 2px solid #2a80ff; }

/* search */
main { flex: 1; font-family: "Noto Sans CJK TC", sans-serif; }
h1 { margin: 72px 0 0; height: 46px; line-height: 46px; text-align: center; font-size: 29px; letter-spacing: 1px; font-weight: 600; background: linear-gradient(#5a83a6 10%, #34506d 45%, #22354b 90%); -webkit-background-clip: text; background-clip: text; color: transparent; width: 632px; margin-left: 645px; white-space: nowrap; }
.searchrow { margin: 12px 0 0 547px; display: flex; align-items: center; height: 86px; gap: 10px; }
.kw { width: 480px; height: 86px; border: 1px solid #dedfe4; border-radius: 10px; padding: 22px 18px; font-size: 16px; line-height: 26px; color: #212529; }
.btn { height: 44px; border: 0; border-radius: 10px; margin-top: 10px; background: #808080; color: #fff; font: 400 16px "Noto Sans CJK TC", sans-serif; width: 123px; display: flex; align-items: center; justify-content: center; gap: 6px; padding: 0 0 2px; }
.btn.go { width: 70px; background: #0078d7; }
.conds { display: flex; align-items: center; height: 24px; margin: 2px 0 0 578px; color: #639; font-size: 16px; line-height: 22px; }
.conds span { padding-bottom: 2px; }
.conds b { height: 24px; border-radius: 12px; background: #639; color: #fff; font-size: 13px; font-weight: 700; line-height: 22px; text-align: center; width: 145px; margin-left: 8px; white-space: nowrap; }
.conds b + b { width: 214px; margin-left: 5px; }

/* map */
.map { position: relative; margin: 24px 0 0 566px; width: 788px; height: 400px; border: 3px solid #639; border-radius: 10px; overflow: hidden; }
.bld { fill: #d9d0c9; stroke: #c3b5aa; stroke-width: 2; }
.paths path { fill: none; }
.halo { stroke: #e6e4d8; stroke-width: 9; stroke-opacity: .6; }
.track { stroke: #f08878; stroke-width: 5; stroke-dasharray: 9 6; }
.foot { stroke: #fa8072; stroke-width: 4; stroke-dasharray: 9 6; }
.steps { stroke: #fa8072; stroke-width: 9; stroke-dasharray: 5 3; }
.cyc { stroke: #c3a9c6; stroke-width: 3.5; stroke-dasharray: 8 6; }
.wild { stroke: #9b8f9c; stroke-width: 3.5; stroke-dasharray: 5 10; }
.lb text { font: 27px "Noto Sans CJK TC", sans-serif; text-anchor: middle; dominant-baseline: central; paint-order: stroke; stroke: rgba(255,255,255,.65); stroke-width: 5px; }
.lb text.poi { font-size: 30px; }
.lb text.metro { font-weight: 700; }
.lb text.park { font: 46px "Open Sans", sans-serif; fill: #0092da; stroke: #0092da; stroke-width: 1px; }
.zoomctl { position: absolute; left: 11px; top: 11px; width: 32px; height: 62px; border: 1px solid #bbb; border-radius: 3px; background: #fff; display: grid; grid-template-rows: 30px 30px; font: bold 21px/30px "Liberation Sans", sans-serif; text-align: center; }
.zoomctl span + span { border-top: 1px solid #ccc; line-height: 28px; }
.locate { position: absolute; left: 50px; top: 14px; width: 108px; height: 25px; background: #808080; color: #fff; font-size: 18px; font-weight: 350; line-height: 26px; display: flex; align-items: center; gap: 6px; padding-left: 9px; white-space: nowrap; }
.scale { position: absolute; left: 5px; bottom: 5px; width: 92px; height: 25px; border: 2px solid #777; border-top: 0; background: rgba(255,255,255,.8); font: 18px/22px "Liberation Sans", sans-serif; padding-left: 5px; color: #444; }
.attr { position: absolute; right: 0; bottom: 0; height: 25px; padding: 0 5px; background: rgba(255,255,255,.8); font: 18px/24px "Liberation Sans", sans-serif; color: #333; white-space: nowrap; width: 341px; }
.attr svg { display: inline-block; margin-right: 5px; }
.attr a { color: #0078a8; }

/* footer */
footer { height: 85px; flex: none; background: #4a5464; color: #fff; display: flex; justify-content: space-between; padding: 14px 20px 0 25px; }
footer p { margin: 0; font: 14px/21px "Noto Sans CJK TC", sans-serif; }
footer .copy { align-self: flex-end; font: 15px/20px "Open Sans", sans-serif; letter-spacing: -.35px; padding-bottom: 9px; white-space: nowrap; }
```
